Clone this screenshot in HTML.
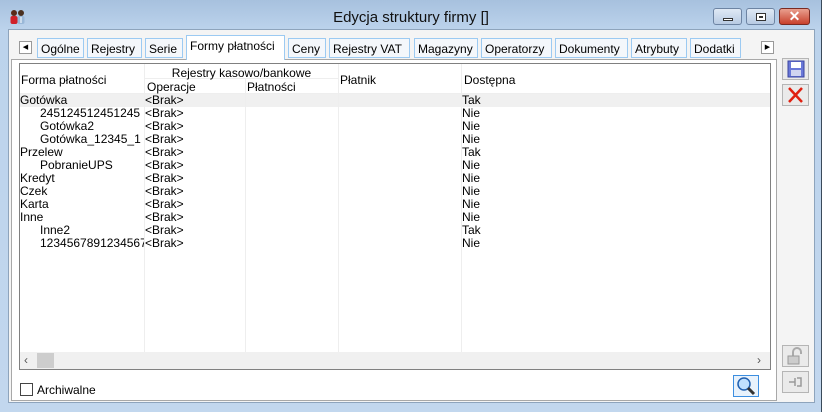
<!DOCTYPE html>
<html><head><meta charset="utf-8"><style>
*{box-sizing:border-box;margin:0;padding:0}
body{width:822px;height:412px;overflow:hidden;font-family:"Liberation Sans",sans-serif;font-size:12px;color:#000;position:relative;background:#a9c4e2}
.abs{position:absolute}
#frame{left:0;top:0;width:822px;height:412px;background:linear-gradient(#a7c1de,#bcd3ec 30px,#c2d7ee);border-right:1px solid #3a4a5a}
#content{left:8px;top:29px;width:807px;height:374px;background:#f4f4f4;border:1px solid #8ea4bc}
.tab{position:absolute;top:38px;height:20px;border:1px solid #9ccaf2;background:#f4f7fb;padding:3px 0 0 3px;font-size:12px;white-space:nowrap}
.tab.act{top:35px;height:25px;background:#fff;border-bottom:none;padding-top:3px}
.btn{position:absolute;border:1px solid #b5b5b5;background:#eaeaea}
.row{position:absolute;left:20px;height:13px;line-height:13px;white-space:nowrap;width:750px}
.row span{position:absolute;top:0}
.vl{position:absolute;top:64px;width:1px;height:288px;background:#eeeeee}
</style></head><body>
<div id="frame" class="abs"></div>
<svg class="abs" style="left:9px;top:9px" width="18" height="16"><circle cx="5" cy="4" r="3" fill="#5a2a1a"/><rect x="1.5" y="7" width="7" height="8" rx="2" fill="#d0202a"/><circle cx="12" cy="4" r="3" fill="#4a3020"/><rect x="8.5" y="7" width="7" height="8" rx="2" fill="#9ab8d8"/><rect x="11.5" y="8" width="1" height="6" fill="#fff"/></svg>
<div class="abs" style="left:0;top:9px;width:822px;text-align:center;font-size:15px;color:#111">Edycja struktury firmy []</div>
<div class="abs" style="left:713px;top:8px;width:29px;height:17px;border:1px solid #6d84a3;border-radius:3px;background:linear-gradient(#dfe9f5,#b8cbe3)"><div class="abs" style="left:9px;top:9px;width:10px;height:3px;background:#fff;border:1px solid #333"></div></div>
<div class="abs" style="left:746px;top:8px;width:29px;height:17px;border:1px solid #6d84a3;border-radius:3px;background:linear-gradient(#dfe9f5,#b8cbe3)"><div class="abs" style="left:9px;top:4px;width:10px;height:8px;border:1px solid #333;background:#fff;box-shadow:inset 0 0 0 2px #fff,inset 0 0 0 3px #333"></div></div>
<div class="abs" style="left:779px;top:8px;width:31px;height:17px;border:1px solid #7a2a22;border-radius:3px;background:linear-gradient(#e9a08f,#c8402c);color:#fff;font-weight:bold;font-size:14px;text-align:center;line-height:15px">✕</div>
<div id="content" class="abs"></div>
<div class="abs" style="left:19px;top:41px;width:13px;height:13px;border:1px solid #999;background:#fff;font-size:7px;text-align:center;line-height:11px">◀</div>
<div class="abs" style="left:761px;top:41px;width:13px;height:13px;border:1px solid #999;background:#fff;font-size:7px;text-align:center;line-height:11px">▶</div>
<div class="tab" style="left:37px;width:47px">Ogólne</div>
<div class="tab" style="left:87px;width:55px">Rejestry</div>
<div class="tab" style="left:145px;width:38px">Serie</div>
<div class="tab" style="left:288px;width:38px">Ceny</div>
<div class="tab" style="left:329px;width:81px">Rejestry VAT</div>
<div class="tab" style="left:414px;width:64px">Magazyny</div>
<div class="tab" style="left:481px;width:71px">Operatorzy</div>
<div class="tab" style="left:555px;width:73px">Dokumenty</div>
<div class="tab" style="left:631px;width:56px">Atrybuty</div>
<div class="tab" style="left:690px;width:51px">Dodatki</div>
<div class="abs" style="left:11px;top:59px;width:766px;height:342px;background:#fff;border:1px solid #a8a8a8"></div>
<div class="tab act" style="left:186px;width:99px">Formy płatności</div>
<div class="abs" style="left:19px;top:63px;width:752px;height:307px;border:1px solid #808080;background:#fff"></div>
<div class="abs" style="left:20px;top:94px;width:750px;height:13px;background:#f0f0f0"></div>
<div class="vl" style="left:144px"></div><div class="vl" style="left:245px;top:79px;height:273px"></div><div class="vl" style="left:338px"></div><div class="vl" style="left:461px"></div>
<div class="abs" style="left:145px;top:78px;width:193px;height:1px;background:#eeeeee"></div>
<div class="abs" style="left:20px;top:93px;width:750px;height:1px;background:#eeeeee"></div>
<div class="abs" style="left:21px;top:73px">Forma płatności</div>
<div class="abs" style="left:145px;top:66px;width:193px;text-align:center">Rejestry kasowo/bankowe</div>
<div class="abs" style="left:147px;top:80px">Operacje</div>
<div class="abs" style="left:247px;top:80px">Płatności</div>
<div class="abs" style="left:340px;top:73px">Płatnik</div>
<div class="abs" style="left:464px;top:73px">Dostępna</div>
<div class="row" style="top:94px"><span style="left:0">Gotówka</span><span style="left:125px">&lt;Brak&gt;</span><span style="left:442px">Tak</span></div>
<div class="row" style="top:107px"><span style="left:20px;width:104px;overflow:hidden">245124512451245</span><span style="left:125px">&lt;Brak&gt;</span><span style="left:442px">Nie</span></div>
<div class="row" style="top:120px"><span style="left:20px">Gotówka2</span><span style="left:125px">&lt;Brak&gt;</span><span style="left:442px">Nie</span></div>
<div class="row" style="top:133px"><span style="left:20px;width:104px;overflow:hidden">Gotówka_12345_1</span><span style="left:125px">&lt;Brak&gt;</span><span style="left:442px">Nie</span></div>
<div class="row" style="top:146px"><span style="left:0">Przelew</span><span style="left:125px">&lt;Brak&gt;</span><span style="left:442px">Tak</span></div>
<div class="row" style="top:159px"><span style="left:20px">PobranieUPS</span><span style="left:125px">&lt;Brak&gt;</span><span style="left:442px">Nie</span></div>
<div class="row" style="top:172px"><span style="left:0">Kredyt</span><span style="left:125px">&lt;Brak&gt;</span><span style="left:442px">Nie</span></div>
<div class="row" style="top:185px"><span style="left:0">Czek</span><span style="left:125px">&lt;Brak&gt;</span><span style="left:442px">Nie</span></div>
<div class="row" style="top:198px"><span style="left:0">Karta</span><span style="left:125px">&lt;Brak&gt;</span><span style="left:442px">Nie</span></div>
<div class="row" style="top:211px"><span style="left:0">Inne</span><span style="left:125px">&lt;Brak&gt;</span><span style="left:442px">Nie</span></div>
<div class="row" style="top:224px"><span style="left:20px">Inne2</span><span style="left:125px">&lt;Brak&gt;</span><span style="left:442px">Tak</span></div>
<div class="row" style="top:237px"><span style="left:20px;width:104px;overflow:hidden">12345678912345678</span><span style="left:125px">&lt;Brak&gt;</span><span style="left:442px">Nie</span></div>
<div class="abs" style="left:20px;top:352px;width:750px;height:17px;background:#f0f0f0"></div>
<div class="abs" style="left:24px;top:353px;color:#555;font-size:12px">‹</div>
<div class="abs" style="left:757px;top:353px;color:#555;font-size:12px">›</div>
<div class="abs" style="left:37px;top:353px;width:17px;height:15px;background:#cdcdcd"></div>
<div class="abs" style="left:20px;top:383px;width:13px;height:13px;border:1px solid #444;background:#fff"></div>
<div class="abs" style="left:37px;top:383px">Archiwalne</div>
<div class="abs" style="left:733px;top:375px;width:26px;height:22px;border:1px solid #3c8ee0;background:#e8f2fc"><svg width="24" height="20"><circle cx="10" cy="8" r="6" fill="#bfe0ff" stroke="#2060b0" stroke-width="1.5"/><line x1="14" y1="12" x2="20" y2="18" stroke="#333" stroke-width="3"/></svg></div>
<div class="btn" style="left:782px;top:58px;width:27px;height:22px"><svg width="25" height="20"><rect x="5" y="2" width="16" height="16" fill="#6a78d8" stroke="#3a44a0"/><rect x="8" y="3" width="10" height="6" fill="#fff"/><rect x="8" y="11" width="10" height="6" fill="#d0d4f0"/></svg></div>
<div class="btn" style="left:782px;top:84px;width:27px;height:22px"><svg width="25" height="20"><path d="M6 3L19 17M19 3L6 17" stroke="#e02010" stroke-width="2.5"/></svg></div>
<div class="btn" style="left:782px;top:345px;width:27px;height:22px"><svg width="25" height="20"><path d="M10 10V6a4 4 0 0 1 8 0v2" fill="none" stroke="#aaa" stroke-width="2"/><rect x="5" y="10" width="11" height="8" fill="#ccc" stroke="#999"/></svg></div>
<div class="btn" style="left:782px;top:371px;width:27px;height:22px"><svg width="25" height="20"><path d="M6 10H12M12 6V14M14 6H18V14H14" fill="none" stroke="#999" stroke-width="1.5"/></svg></div>
</body></html>
